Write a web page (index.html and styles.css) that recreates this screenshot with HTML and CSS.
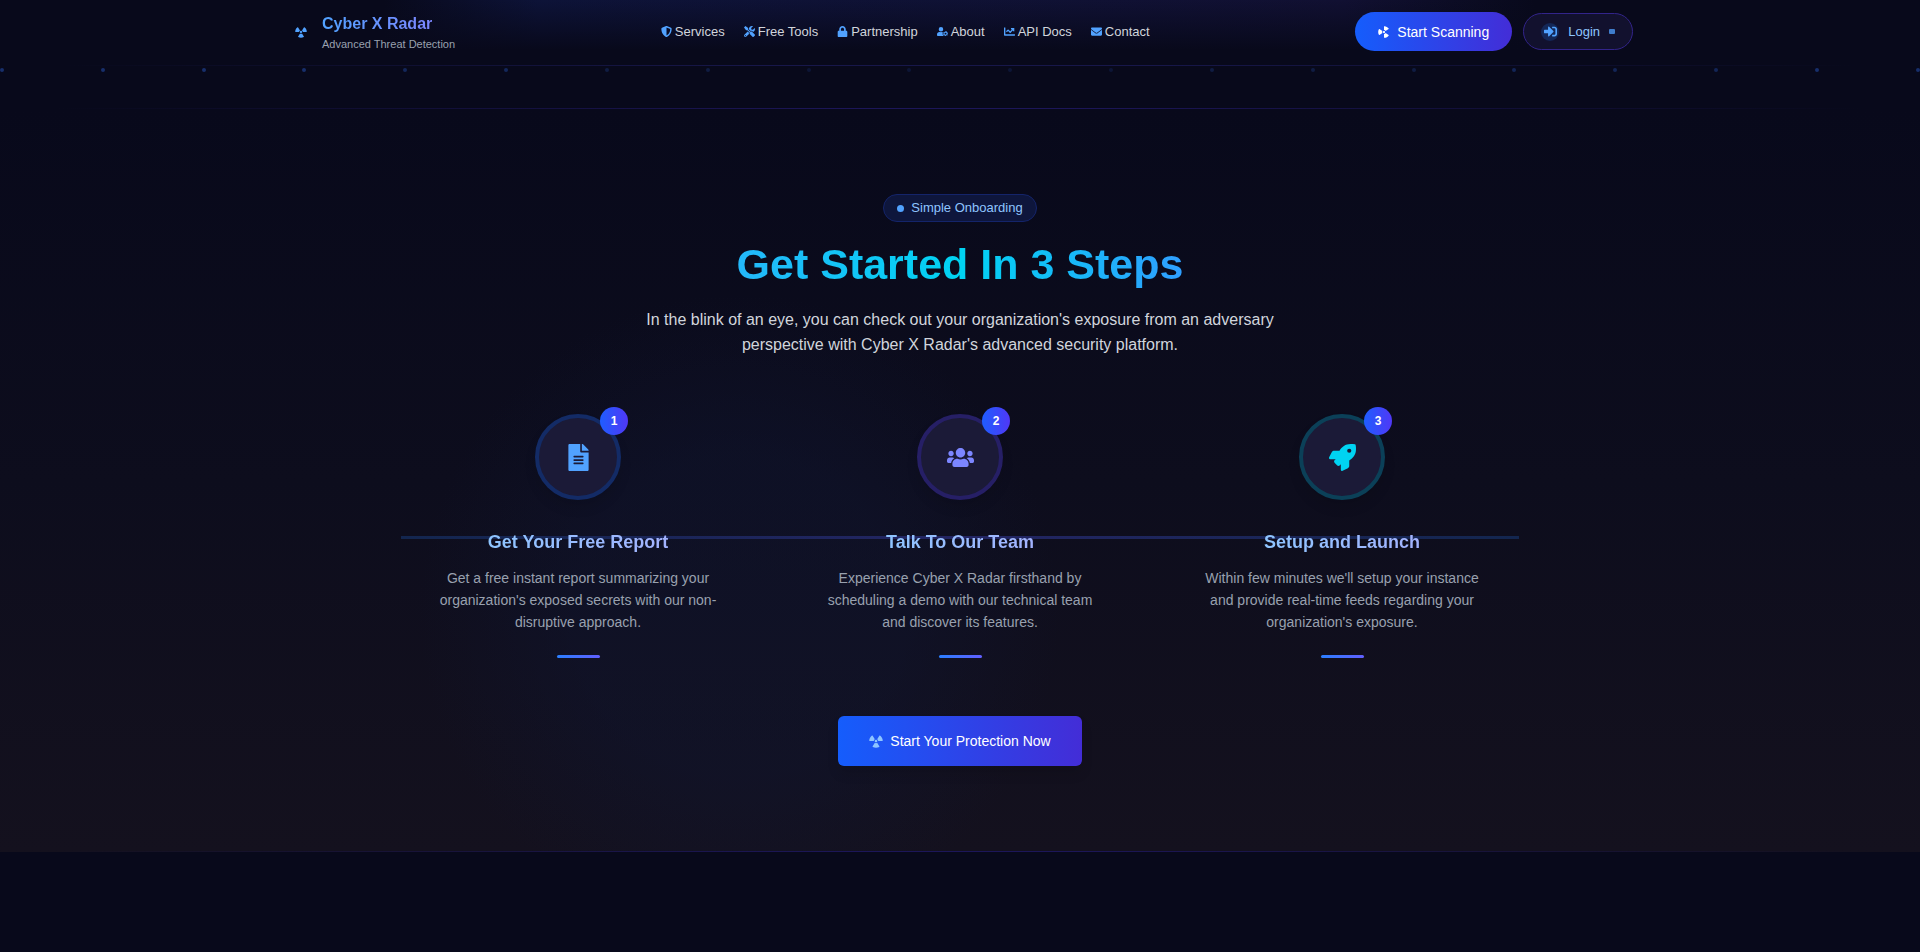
FILE: index.html
```html
<!DOCTYPE html>
<html lang="en">
<head>
<meta charset="utf-8">
<title>Cyber X Radar</title>
<link rel="stylesheet" href="styles.css">
</head>
<body>
<svg class="sprite" aria-hidden="true">
  <symbol id="radiation" viewBox="0 0 496 512"><path d="M328.2 255.8h151.6c9.1 0 16.8-7.7 16.2-16.8-5.1-75.8-44.4-142.2-102.5-184.2-7.4-5.3-17.9-2.9-22.7 4.8L290.4 188c22.6 14.3 37.8 39.2 37.8 67.8zm-37.8 67.7c-12.3 7.7-26.8 12.4-42.4 12.4-15.6 0-30-4.7-42.4-12.4L125.2 452c-4.8 7.7-2.4 18.1 5.6 22.4C165.7 493.2 205.6 504 248 504s82.3-10.8 117.2-29.6c8-4.3 10.4-14.8 5.6-22.4l-80.4-128.5zM248 303.8c26.5 0 48-21.5 48-48s-21.5-48-48-48-48 21.5-48 48 21.5 48 48 48zm-231.8-48h151.6c0-28.6 15.2-53.5 37.8-67.7L125.2 59.7c-4.8-7.7-15.4-10.2-22.7-4.8C44.4 96.9 5.1 163.3 0 239.1c-.6 9 7.1 16.7 16.2 16.7z"/></symbol>
  <symbol id="shield" viewBox="0 0 512 512"><path d="M466.5 83.7l-192-80a48.15 48.15 0 0 0-36.9 0l-192 80C27.7 91.1 16 108.6 16 128c0 198.5 114.5 335.7 221.5 380.3 11.8 4.9 25.1 4.9 36.9 0C360.1 472.6 496 349.3 496 128c0-19.4-11.7-36.9-29.5-44.3zM256.1 446.3l-.1-381 175.9 73.3c-3.3 151.4-82.1 261.1-175.8 307.7z"/></symbol>
  <symbol id="tools" viewBox="0 0 512 512"><path d="M501.100 395.700L384 278.600c-23.100-23.100-57.600-27.600-85.400-13.900L192 158.100V96L64 0 0 64l96 128h62.100l106.600 106.600c-13.600 27.800-9.200 62.300 13.900 85.400l117.100 117.100c14.600 14.600 38.200 14.600 52.700 0l52.700-52.700c14.500-14.600 14.500-38.200 0-52.700zM331.700 225c28.300 0 54.900 11 74.900 31l19.400 19.400c15.800-6.900 30.800-16.500 43.800-29.500 37.100-37.100 49.700-89.300 37.900-136.700-2.200-9-13.500-12.100-20.100-5.500l-74.400 74.400-67.900-11.300L334 98.900l74.400-74.400c6.600-6.600 3.400-17.900-5.700-20.200-47.400-11.700-99.600.9-136.600 37.900-28.500 28.500-41.900 66.100-41.200 103.600l82.100 82.100c8.100-1.900 16.500-2.900 24.700-2.900zm-103.900 82l-56.700-56.700L18.700 402.800c-25 25-25 65.500 0 90.500s65.500 25 90.500 0l123.600-123.600c-7.600-19.900-9.900-41.600-5-62.700zM64 472c-13.200 0-24-10.800-24-24 0-13.300 10.700-24 24-24s24 10.700 24 24c0 13.200-10.700 24-24 24z"/></symbol>
  <symbol id="lock" viewBox="0 0 448 512"><path d="M400 224h-24v-72C376 68.2 307.800 0 224 0S72 68.200 72 152v72H48c-26.500 0-48 21.500-48 48v192c0 26.500 21.500 48 48 48h352c26.500 0 48-21.500 48-48V272c0-26.500-21.500-48-48-48zm-104 0H152v-72c0-39.700 32.300-72 72-72s72 32.300 72 72v72z"/></symbol>
  <symbol id="user-cog" viewBox="0 0 620 512"><path d="M224 256a128 128 0 1 0 0-256 128 128 0 0 0 0 256zm96 42c-10-6-20-10-30-10h-20a174 174 0 0 1-92 0h-44C60 288 0 348 0 422v42c0 26 22 48 48 48h352c-46-30-80-70-80-120z"/><path fill-rule="evenodd" d="m456 224 16 38 28-8 22-18 34 22-2 42 30 18 40 6-2 42-36 20-2 30 20 34-30 30-38-12-26 14-18 30h-42l-16-36-26-14-40 4-22-38 24-32v-32l-24-32 26-34 40 6 24-16zm24 96a56 56 0 1 0 0 112 56 56 0 0 0 0-112z"/></symbol>
  <symbol id="chart" viewBox="0 0 512 512"><path d="M496 384H64V80c0-8.800-7.200-16-16-16H16C7.200 64 0 71.200 0 80v336c0 17.700 14.300 32 32 32h464c8.800 0 16-7.200 16-16v-32c0-8.800-7.200-16-16-16zM464 96H345.900c-21.400 0-32.100 25.900-17 41l32.400 32.400L288 242.700l-73.400-73.400c-12.500-12.500-32.800-12.500-45.200 0l-68.700 68.700c-6.200 6.200-6.200 16.400 0 22.600l22.600 22.600c6.200 6.200 16.400 6.200 22.600 0L192 237.300l73.400 73.400c12.500 12.500 32.800 12.500 45.200 0l96-96 32.400 32.400c15.100 15.100 41 4.400 41-17V112c0-8.800-7.200-16-16-16z"/></symbol>
  <symbol id="envelope" viewBox="0 0 512 512"><path d="M502.300 190.800c3.900-3.100 9.700-.2 9.700 4.700V400c0 26.500-21.500 48-48 48H48c-26.500 0-48-21.500-48-48V195.600c0-5 5.700-7.800 9.700-4.700 22.400 17.400 52.100 39.500 154.100 113.600 21.100 15.400 56.700 47.800 92.200 47.600 35.700.3 72-32.800 92.300-47.600 102-74.100 131.600-96.300 154-113.700zM256 320c23.200.4 56.600-29.200 73.400-41.400 132.700-96.300 142.800-104.700 173.400-128.700 5.800-4.500 9.200-11.500 9.200-18.900v-19c0-26.500-21.500-48-48-48H48c-26.500 0-48 21.500-48 48v19c0 7.400 3.400 14.300 9.200 18.900 30.600 23.900 40.700 32.400 173.400 128.700 16.800 12.200 50.200 41.800 73.400 41.400z"/></symbol>
  <symbol id="sign-in" viewBox="0 0 512 512"><path d="M416 448h-84c-6.600 0-12-5.400-12-12v-40c0-6.600 5.400-12 12-12h84c17.700 0 32-14.300 32-32V160c0-17.700-14.300-32-32-32h-84c-6.600 0-12-5.400-12-12V76c0-6.600 5.400-12 12-12h84c53 0 96 43 96 96v192c0 53-43 96-96 96zm-47-209L201 71c-15-15-41-4.500-41 17v96H24c-13.300 0-24 10.700-24 24v96c0 13.300 10.700 24 24 24h136v96c0 21.500 26 32 41 17l168-168c9.300-9.400 9.300-24.600 0-34z"/></symbol>
  <symbol id="file" viewBox="0 0 384 512"><path d="M224 136V0H24C10.700 0 0 10.700 0 24v464c0 13.300 10.700 24 24 24h336c13.300 0 24-10.700 24-24V160H248c-13.200 0-24-10.800-24-24zm64 236c0 6.600-5.400 12-12 12H108c-6.600 0-12-5.400-12-12v-8c0-6.600 5.400-12 12-12h168c6.600 0 12 5.400 12 12v8zm0-64c0 6.600-5.400 12-12 12H108c-6.600 0-12-5.400-12-12v-8c0-6.600 5.400-12 12-12h168c6.600 0 12 5.400 12 12v8zm0-72v8c0 6.600-5.400 12-12 12H108c-6.600 0-12-5.400-12-12v-8c0-6.600 5.400-12 12-12h168c6.600 0 12 5.400 12 12zm96-114.100v6.100H256V0h6.100c6.400 0 12.500 2.500 17 7l97.900 98c4.500 4.500 7 10.600 7 16.900z"/></symbol>
  <symbol id="users" viewBox="0 0 640 512"><path d="M96 224c35.300 0 64-28.700 64-64s-28.700-64-64-64-64 28.700-64 64 28.700 64 64 64zm448 0c35.300 0 64-28.700 64-64s-28.700-64-64-64-64 28.700-64 64 28.700 64 64 64zm32 32h-64c-17.600 0-33.500 7.100-45.100 18.600 40.300 22.100 68.900 62 75.100 109.400h66c17.700 0 32-14.300 32-32v-32c0-35.300-28.700-64-64-64zm-256 0c61.900 0 112-50.100 112-112S381.900 32 320 32 208 82.100 208 144s50.100 112 112 112zm76.800 32h-8.300c-20.800 10-43.900 16-68.500 16s-47.600-6-68.500-16h-8.300C179.600 288 128 339.600 128 403.200V432c0 26.500 21.500 48 48 48h288c26.500 0 48-21.500 48-48v-28.800c0-63.600-51.600-115.200-115.200-115.200zm-223.700-13.400C161.500 263.100 145.600 256 128 256H64c-35.300 0-64 28.700-64 64v32c0 17.700 14.300 32 32 32h65.900c6.300-47.400 34.900-87.300 75.200-109.400z"/></symbol>
  <symbol id="rocket" viewBox="0 0 512 512"><path d="M505.100 19.100c-1.200-5.500-6.700-11-12.200-12.200C460.700 0 435.500 0 410.400 0 307.200 0 245.300 55.200 199.100 128H94.800c-16.300 0-35.600 11.900-42.900 26.500L2.500 253.300A28.400 28.400 0 0 0 0 264a24 24 0 0 0 24 24h103.800l-22.500 22.500c-11.400 11.400-13 32.300 0 45.200l50.900 50.900c11.200 11.200 32.200 13.200 45.300 0l22.500-22.500V488a24 24 0 0 0 24 24 28.600 28.600 0 0 0 10.700-2.500l98.700-49.400c14.600-7.300 26.500-26.500 26.500-42.900V312.800c72.600-46.300 128-108.400 128-211.100.2-25.200.2-50.400-6.800-82.600zM384 168a40 40 0 1 1 40-40 40 40 0 0 1-40 40z"/></symbol>
</svg>

<header class="header">
  <div class="header-inner">
    <a class="brand" href="#">
      <svg class="icon brand-icon"><use href="#radiation"/></svg>
      <span class="brand-text">
        <span class="brand-name">Cyber X Radar</span>
        <span class="brand-tag">Advanced Threat Detection</span>
      </span>
    </a>
    <nav class="nav">
      <a href="#"><svg class="icon"><use href="#shield"/></svg>Services</a>
      <a href="#"><svg class="icon"><use href="#tools"/></svg>Free Tools</a>
      <a href="#"><svg class="icon"><use href="#lock"/></svg>Partnership</a>
      <a href="#"><svg class="icon"><use href="#user-cog"/></svg>About</a>
      <a href="#"><svg class="icon"><use href="#chart"/></svg>API Docs</a>
      <a href="#"><svg class="icon"><use href="#envelope"/></svg>Contact</a>
    </nav>
    <div class="actions">
      <button class="scan" type="button"><svg class="icon scan-icon"><use href="#radiation"/></svg>Start Scanning</button>
      <a class="login" href="#"><span class="login-badge"><svg class="icon"><use href="#sign-in"/></svg></span>Login<span class="login-dot"></span></a>
    </div>
  </div>
</header>
<div class="dots" aria-hidden="true">
  <i></i><i></i><i></i><i></i><i></i><i></i><i></i><i></i><i></i><i></i><i></i><i></i><i></i><i></i><i></i><i></i><i></i><i></i><i></i><i></i>
</div>

<main class="onboarding">
  <span class="pill"><span class="pill-dot"></span>Simple Onboarding</span>
  <h1 class="title">Get Started In 3 Steps</h1>
  <p class="lead">In the blink of an eye, you can check out your organization's exposure from an adversary perspective with Cyber X Radar's advanced security platform.</p>
  <div class="steps">
    <section class="step step-blue">
      <div class="disc"><svg class="icon"><use href="#file"/></svg><span class="number">1</span></div>
      <h2>Get Your Free Report</h2>
      <p>Get a free instant report summarizing your organization's exposed secrets with our non-disruptive approach.</p>
      <span class="bar"></span>
    </section>
    <section class="step step-indigo">
      <div class="disc"><svg class="icon"><use href="#users"/></svg><span class="number">2</span></div>
      <h2>Talk To Our Team</h2>
      <p>Experience Cyber X Radar firsthand by scheduling a demo with our technical team and discover its features.</p>
      <span class="bar"></span>
    </section>
    <section class="step step-cyan">
      <div class="disc"><svg class="icon"><use href="#rocket"/></svg><span class="number">3</span></div>
      <h2>Setup and Launch</h2>
      <p>Within few minutes we'll setup your instance and provide real-time feeds regarding your organization's exposure.</p>
      <span class="bar"></span>
    </section>
  </div>
  <button class="cta" type="button"><svg class="icon"><use href="#radiation"/></svg>Start Your Protection Now</button>
</main>
</body>
</html>
```
FILE: styles.css
```css
* { box-sizing: border-box; }

body {
  margin: 0;
  min-height: 100vh;
  background: #08091b;
  color: #d1d5dc;
  font-family: "Liberation Sans", Arial, sans-serif;
  font-size: 16px;
  line-height: 24px;
}

a { color: inherit; text-decoration: none; }
button { border: 0; font: inherit; color: #fff; }
h1, h2, p { margin: 0; }

.sprite { position: absolute; width: 0; height: 0; }
.icon { display: block; flex: none; width: 12px; height: 12px; fill: currentColor; }

/* Header */
.header {
  background:
    linear-gradient(90deg, transparent 3%, #17174a 40%, #17174a 60%, transparent 97%) bottom / 100% 1px no-repeat,
    linear-gradient(180deg, transparent, #08091b 50px),
    linear-gradient(90deg, transparent 20%, #0d1338 28%, #111032 70%, transparent 80%);
}
.header-inner {
  display: flex;
  align-items: center;
  justify-content: space-between;
  max-width: 1360px;
  min-height: 66px;
  margin: 0 auto;
  padding: 0 7px 3px 14px;
}
.brand { display: flex; align-items: center; gap: 14px; }
.brand-icon { width: 14px; height: 12px; color: #51a2ff; }
.brand-text { display: flex; flex-direction: column; align-items: flex-start; }
.brand-name {
  background: linear-gradient(90deg, #51a2ff, #7c86ff);
  background-clip: text;
  color: transparent;
  font-size: 16px;
  font-weight: 700;
  line-height: 24px;
}
.brand-tag { color: #99a1af; font-size: 11px; line-height: 16px; }
.nav { display: flex; gap: 19px; font-size: 13px; line-height: 20px; }
.nav a { display: flex; align-items: center; gap: 3px; }
.nav .icon { width: 11px; height: 11px; color: #51a2ff; }
.actions { display: flex; align-items: center; justify-content: flex-end; gap: 11px; }
.scan {
  display: flex;
  align-items: center;
  gap: 7px;
  height: 39px;
  padding: 0 23px;
  border-radius: 20px;
  background: linear-gradient(90deg, #155dfc, #432dd7);
  font-size: 14px;
}
.scan-icon { transform: rotate(90deg); }
.login {
  display: flex;
  align-items: center;
  gap: 9px;
  height: 37px;
  padding: 0 17px;
  border: 1px solid #32248a;
  border-radius: 19px;
  background: #12112e;
  color: #8ec5ff;
  font-size: 13px;
}
.login-badge {
  display: grid;
  place-items: center;
  width: 18px;
  height: 18px;
  border-radius: 50%;
  background: #142757;
  color: #51a2ff;
}
.login-badge .icon { width: 13px; height: 13px; }
.login-dot { width: 6px; height: 5px; border-radius: 1px; background: #3f7ccb; }

/* Row of markers under the header */
.dots {
  display: flex;
  justify-content: space-between;
  height: 42px;
  padding-top: 2px;
}
.dots i { width: 4px; height: 4px; border-radius: 50%; background: #172f6b; }
.dots i:nth-child(n+5) { opacity: 0.8; }
.dots i:nth-child(n+7) { opacity: 0.5; }
.dots i:nth-child(n+9) { opacity: 0.35; }
.dots i:nth-child(n+13) { opacity: 0.5; }
.dots i:nth-child(n+16) { opacity: 0.75; }
.dots i:nth-child(n+19) { opacity: 1; }

/* Onboarding */
.onboarding {
  display: flex;
  flex-direction: column;
  align-items: center;
  padding: 86px 16px;
  background:
    linear-gradient(90deg, transparent 3%, #1c1659 45%, #1c1659 55%, transparent 97%) top / 100% 1px no-repeat,
    linear-gradient(90deg, transparent 3%, #1c1659 45%, #1c1659 55%, transparent 97%) bottom / 100% 1px no-repeat,
    radial-gradient(circle 320px at 38.5% 68%, rgba(16, 22, 50, 0.4) 50%, transparent 100%),
    linear-gradient(180deg, #08091b, #0d0d1d 50%, #14111e);
}
.pill {
  display: flex;
  align-items: center;
  gap: 7px;
  height: 28px;
  padding: 0 13px;
  border: 1px solid #14246a;
  border-radius: 14px;
  background: #0e163c;
  color: #8ec5ff;
  font-size: 13px;
}
.pill-dot { width: 7px; height: 7px; border-radius: 50%; background: #51a2ff; }
.title {
  margin-top: 14px;
  background: linear-gradient(90deg, #24b8fa, #00d3f2 50%, #2f9fff);
  background-clip: text;
  color: transparent;
  font-size: 43px;
  font-weight: 700;
  line-height: 56px;
}
.lead {
  max-width: 680px;
  margin-top: 15px;
  font-size: 16px;
  line-height: 25px;
  text-align: center;
}
.steps {
  position: relative;
  display: grid;
  grid-template-columns: repeat(3, 1fr);
  gap: 28px;
  width: 100%;
  max-width: 1118px;
  margin-top: 57px;
}
.steps::before {
  content: "";
  position: absolute;
  top: 50%;
  left: 0;
  right: 0;
  height: 3px;
  background: linear-gradient(90deg, #13264f, #232563 50%, #13264f);
}
.step {
  position: relative;
  display: flex;
  flex-direction: column;
  align-items: center;
  padding: 0 32px;
  text-align: center;
}
.disc {
  position: relative;
  display: grid;
  place-items: center;
  width: 86px;
  height: 86px;
  border: 4px solid;
  border-radius: 50%;
  background: #1b1a37;
  box-shadow: 0 8px 12px rgba(0, 0, 0, 0.1);
}
.disc .icon { width: 27px; height: 27px; }
.step-blue .disc { border-color: #132b66; }
.step-blue .icon { color: #51a2ff; }
.step-indigo .disc { border-color: #261f66; }
.step-indigo .icon { color: #7c86ff; }
.step-cyan .disc { border-color: #0b4058; }
.step-cyan .icon { color: #00d3f2; }
.number {
  position: absolute;
  top: -11px;
  right: -11px;
  width: 28px;
  height: 28px;
  border-radius: 50%;
  background: linear-gradient(90deg, #1f5dff, #5038f6);
  color: #fff;
  font-size: 12px;
  font-weight: 700;
  line-height: 28px;
}
.step h2 {
  margin-top: 29px;
  background: linear-gradient(90deg, #8ec5ff, #a3b3ff);
  background-clip: text;
  color: transparent;
  font-size: 18px;
  line-height: 26px;
}
.step p {
  margin-top: 12px;
  color: #99a1af;
  font-size: 14px;
  line-height: 22px;
}
.bar {
  width: 43px;
  height: 3px;
  margin-top: 22px;
  border-radius: 2px;
  background: linear-gradient(90deg, #2b7fff, #615fff);
}
.cta {
  display: flex;
  align-items: center;
  gap: 7px;
  height: 50px;
  margin-top: 58px;
  padding: 0 31px;
  border-radius: 6px;
  background: linear-gradient(90deg, #155dfc, #432dd7);
  box-shadow: 0 8px 12px rgba(0, 0, 0, 0.1);
  font-size: 14px;
}
.cta .icon { width: 14px; height: 14px; color: #8ec5ff; }
```
